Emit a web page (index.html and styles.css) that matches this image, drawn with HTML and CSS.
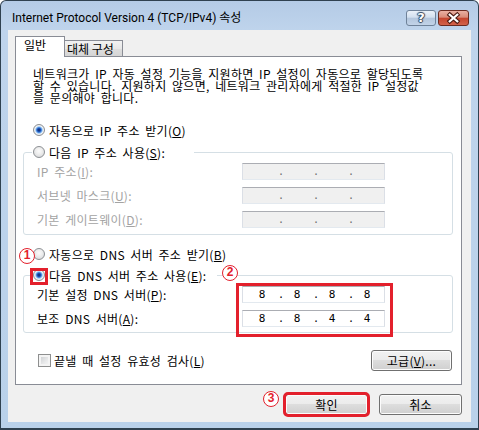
FILE: index.html
```html
<!DOCTYPE html>
<html>
<head lang="ko">
    <meta charset="UTF-8">
    <title>Internet Protocol Version 4 (TCP/IPv4) 속성</title>
    <link rel="stylesheet" href="styles.css">
</head>
<body>
<div class="window">
    <!--제목 표시줄-->
    <div class="titlebar">
        <span class="title">Internet Protocol Version 4 (TCP/IPv4) 속성</span>
        <div class="caption">
            <span class="cap help">?</span>
            <span class="cap close">
                <svg width="31" height="16" viewBox="0 0 31 16">
                    <path d="M11.5 4.5 L19.5 11.5 M19.5 4.5 L11.5 11.5" stroke="#4a1a12" stroke-width="4.6" stroke-linecap="square" fill="none"/>
                    <path d="M11.5 4.5 L19.5 11.5 M19.5 4.5 L11.5 11.5" stroke="#fff" stroke-width="2.4" stroke-linecap="square" fill="none"/>
                </svg>
            </span>
        </div>
    </div>

    <div class="client">
        <div class="tabs">
            <span class="tab active">일반</span>
            <span class="tab">대체 구성</span>
        </div>

        <div class="panel">
            <p class="desc">네트워크가 IP 자동 설정 기능을 지원하면 IP 설정이 자동으로 할당되도록<br>할 수 있습니다. 지원하지 않으면, 네트워크 관리자에게 적절한 IP 설정값<br>을 문의해야 합니다.</p>

            <div class="option first"><span class="radio checked"></span><span>자동으로 IP 주소 받기(<u>O</u>)</span></div>

            <div class="group ip-group">
                <div class="group-head"><span class="radio"></span><span>다음 IP 주소 사용(<u>S</u>):</span></div>
                <div class="rows">
                    <span class="lbl off">IP 주소(<u>I</u>):</span>
                    <span class="ipbox off"><i></i><b>.</b><i></i><b>.</b><i></i><b>.</b><i></i></span>
                    <span class="lbl off">서브넷 마스크(<u>U</u>):</span>
                    <span class="ipbox off"><i></i><b>.</b><i></i><b>.</b><i></i><b>.</b><i></i></span>
                    <span class="lbl off">기본 게이트웨이(<u>D</u>):</span>
                    <span class="ipbox off"><i></i><b>.</b><i></i><b>.</b><i></i><b>.</b><i></i></span>
                </div>
            </div>

            <div class="option dns"><span class="radio"></span><span>자동으로 DNS 서버 주소 받기(<u>B</u>)</span></div>

            <div class="group dns-group">
                <div class="group-head"><span class="radio checked"></span><span>다음 DNS 서버 주소 사용(<u>E</u>):</span></div>
                <div class="rows">
                    <span class="lbl">기본 설정 DNS 서버(<u>P</u>):</span>
                    <span class="ipbox"><i>8</i><b>.</b><i>8</i><b>.</b><i>8</i><b>.</b><i>8</i></span>
                    <span class="lbl">보조 DNS 서버(<u>A</u>):</span>
                    <span class="ipbox"><i>8</i><b>.</b><i>8</i><b>.</b><i>4</i><b>.</b><i>4</i></span>
                </div>
            </div>

            <div class="bottom-row">
                <div class="check-opt"><span class="checkbox"></span><span>끝낼 때 설정 유효성 검사(<u>L</u>)</span></div>
                <span class="btn adv"><span>고급(<u>V</u>)...</span></span>
            </div>
        </div>

        <div class="actions">
            <span class="btn marked">확인</span>
            <span class="btn">취소</span>
        </div>
    </div>

    <!--안내 표시-->
    <span class="num n1">1</span>
    <span class="mark m1"></span>
    <span class="num n2">2</span>
    <span class="mark m2"></span>
    <span class="num n3">3</span>
</div>
</body>
</html>
```

FILE: styles.css
```css
* {
    margin: 0;
    padding: 0;
}

body {
    width: 479px;
    height: 430px;
    overflow: hidden;
    font-family: "Noto Sans CJK KR", sans-serif;
    font-size: 12px;
    color: #000;
}

u {
    text-decoration: underline;
    text-underline-offset: 1px;
}

.window {
    position: relative;
    width: 479px;
    height: 430px;
    box-sizing: border-box;
    padding: 0 7px 6px 7px;
    border: 1px solid #2f4150;
    border-bottom-width: 2px;
    border-radius: 6px 6px 0 0;
    background: linear-gradient(180deg, #b4cbe6 0, #bfd4ec 30px, #b9d1ea 100%);
}

/* 제목 표시줄 */
.titlebar {
    height: 29px;
    display: flex;
    justify-content: space-between;
    align-items: flex-start;
}

.title {
    margin: 9px 0 0 4px;
    line-height: 16px;
    font-family: Roboto, "Noto Sans CJK KR", sans-serif;
    font-size: 12px;
    color: #000;
}

.caption {
    display: flex;
    gap: 2px;
    margin: 9px 2px 0 0;
}

.cap {
    height: 16px;
    box-sizing: border-box;
    border-radius: 3px;
    display: flex;
    justify-content: center;
    align-items: center;
}

.help {
    width: 30px;
    border: 1px solid #6f8299;
    background: linear-gradient(180deg, #eaf1f9 0, #d3e0ef 45%, #b3c6dd 50%, #c2d3e8 100%);
    color: #fff;
    font-family: "DejaVu Sans", sans-serif;
    font-weight: bold;
    font-size: 13px;
    line-height: 14px;
    text-shadow: 0 0 1px #334760, 1px 0 1px #334760, -1px 0 1px #334760, 0 1px 1px #334760, 0 -1px 1px #334760;
}

.close {
    width: 31px;
    border: 1px solid #6b2b20;
    background: linear-gradient(180deg, #eab0a2 0, #d98b78 45%, #c5442d 50%, #d2634b 100%);
}

.close svg {
    display: block;
}

/* 본문 영역 */
.client {
    height: 392px;
    box-sizing: border-box;
    padding: 6px 9px 4px 7px;
    background-color: #f0f0f0;
    letter-spacing: 0.3px;
    word-spacing: 2.5px;
}

.tabs {
    display: flex;
    align-items: flex-end;
    height: 20px;
}

.tab {
    box-sizing: border-box;
    border: 1px solid #898c95;
    border-bottom: none;
    letter-spacing: 0;
    word-spacing: 0;
}

.tab.active {
    position: relative;
    z-index: 1;
    width: 50px;
    height: 21px;
    margin-bottom: -1px;
    padding-left: 8px;
    line-height: 16px;
    background-color: #fff;
}

.tab:not(.active) {
    width: 58px;
    height: 16px;
    padding-left: 2px;
    line-height: 15px;
    border-left: none;
    background: linear-gradient(180deg, #f2f2f2 0, #e8e8e8 50%, #dedede 50%, #d5d5d5 100%);
}

.panel {
    border: 1px solid #898c95;
    background-color: #fff;
    padding-bottom: 13px;
}

.desc {
    height: 35px;
    margin: 11px 0 0 17px;
    line-height: 12px;
}

.option {
    display: flex;
    align-items: center;
    gap: 4px;
    height: 14px;
    margin-left: 17px;
}

.option.first {
    margin-top: 20px;
}

.option.dns {
    margin-top: 12px;
}

.radio {
    flex: none;
    width: 12px;
    height: 12px;
    box-sizing: border-box;
    border-radius: 50%;
    border: 1px solid #8c8f93;
    background: radial-gradient(circle at 50% 40%, #fbfbfb 0, #eeeeee 40%, #d0d2d4 100%);
}

.radio.checked {
    background: radial-gradient(circle at 50% 50%, #0c2661 0, #1d4fb0 1.6px, #4c8de0 2.6px, #a9d0f5 3.4px, #f2f4f6 4.2px, #d4d6d8 100%);
}

/* 그룹 상자 */
.group {
    margin: 15px 8px 0 7px;
    border: 1px solid #d5dfe5;
    border-radius: 3px;
}

.ip-group {
    padding: 1px 0 3px 0;
}

.dns-group {
    margin-top: 14px;
    padding: 2px 0 2px 0;
}

.group-head {
    display: flex;
    align-items: center;
    gap: 4px;
    height: 14px;
    margin: -9px 0 0 8px;
    padding-left: 1px;
    background-color: #fff;
}

.ip-group .group-head {
    width: 161px;
}

.dns-group .group-head {
    width: 184px;
    margin-top: -10px;
}

.rows {
    display: grid;
    grid-template-columns: 205px 143px;
    grid-auto-rows: 24px;
    align-items: center;
    padding-left: 13px;
}

.lbl.off {
    color: #a3a3a3;
}

.ipbox {
    display: flex;
    height: 17px;
    box-sizing: border-box;
    padding-left: 3px;
    border: 1px solid #dbdfe6;
    border-top-color: #abadb3;
    border-bottom-color: #e3e9ef;
    background-color: #fff;
    line-height: 15px;
    letter-spacing: 0;
    font-family: "DejaVu Sans Mono", "Liberation Mono", monospace;
    font-size: 11px;
}

.ipbox.off {
    background-color: #f0f0f0;
    color: #6d6d6d;
}

.ipbox i {
    width: 32px;
    font-style: normal;
    text-align: center;
}

.ipbox b {
    width: 3px;
    font-weight: normal;
    text-align: center;
    font-size: 10px;
}

.bottom-row {
    display: flex;
    justify-content: space-between;
    align-items: center;
    height: 21px;
    margin: 17px 9px 0 22px;
}

.check-opt {
    display: flex;
    align-items: center;
    gap: 3px;
}

.checkbox {
    flex: none;
    width: 13px;
    height: 13px;
    box-sizing: border-box;
    border: 1px solid #8e8f8f;
    background: linear-gradient(135deg, #c6c8cb 0, #e9eaeb 60%, #f8f8f8 100%);
    box-shadow: inset 0 0 0 2px #f4f4f4;
}

/* 버튼 */
.btn {
    display: flex;
    justify-content: center;
    align-items: center;
    height: 21px;
    box-sizing: border-box;
    border: 1px solid #707070;
    border-radius: 3px;
    background: linear-gradient(180deg, #f2f2f2 0, #ebebeb 48%, #dddddd 50%, #cfcfcf 100%);
    box-shadow: inset 0 0 0 1px #fcfcfc;
}

.btn.adv {
    width: 81px;
}

.actions {
    display: flex;
    justify-content: flex-end;
    gap: 11px;
    margin-top: 9px;
}

.actions .btn {
    width: 83px;
}

.btn.marked {
    outline: 3px solid #e3202c;
    outline-offset: -1px;
}

/* 빨간 안내 표시 */
.num {
    position: absolute;
    width: 16px;
    height: 16px;
    box-sizing: border-box;
    border: 1.5px solid #e3202c;
    border-radius: 50%;
    background-color: #fff;
    color: #e3202c;
    font-family: "Liberation Sans", sans-serif;
    font-weight: bold;
    font-size: 12px;
    line-height: 13px;
    text-align: center;
}

.n1 {
    left: 18px;
    top: 247px;
}

.n2 {
    left: 221px;
    top: 264px;
}

.n3 {
    left: 262px;
    top: 390px;
}

.mark {
    position: absolute;
    box-sizing: border-box;
    border: 3px solid #e3202c;
}

.m1 {
    left: 29px;
    top: 267px;
    width: 18px;
    height: 17px;
}

.m2 {
    left: 235px;
    top: 282px;
    width: 157px;
    height: 54px;
}
```
